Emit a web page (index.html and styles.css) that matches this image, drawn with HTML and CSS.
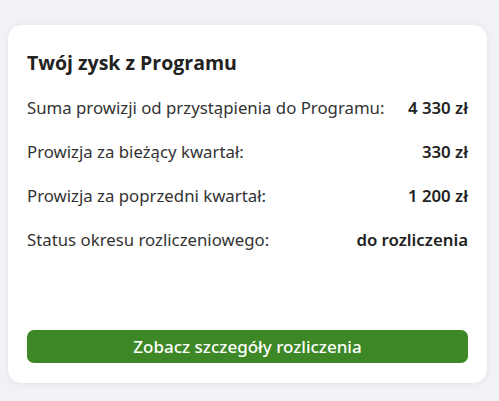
FILE: index.html
```html
<!DOCTYPE html>
<html lang="pl">
<head>
<meta charset="utf-8">
<link rel="stylesheet" href="styles.css">
</head>
<body>
<div class="card">
  <h2 class="title">Twój zysk z Programu</h2>
  <div class="rows">
    <div class="row"><span class="label">Suma prowizji od przystąpienia do Programu:</span><span class="value">4 330 zł</span></div>
    <div class="row"><span class="label">Prowizja za bieżący kwartał:</span><span class="value">330 zł</span></div>
    <div class="row"><span class="label">Prowizja za poprzedni kwartał:</span><span class="value">1 200 zł</span></div>
    <div class="row"><span class="label">Status okresu rozliczeniowego:</span><span class="value">do rozliczenia</span></div>
  </div>
  <button class="btn">Zobacz szczegóły rozliczenia</button>
</div>
</body>
</html>
```
FILE: styles.css
```css
html, body {
  margin: 0;
  padding: 0;
  background: #f1f2f6;
}
body {
  padding: 25px 12px 18px 8px;
  font-family: "Noto Sans", "Open Sans", sans-serif;
  color: #2b2b2b;
}
.card {
  background: #fff;
  border-radius: 14px;
  box-shadow: 0 1px 6px rgba(40, 45, 70, 0.08);
  height: 358px;
  box-sizing: border-box;
  padding: 26px 19px 20px 19px;
  display: flex;
  flex-direction: column;
}
.title {
  margin: 0;
  font-family: "Open Sans", sans-serif;
  font-weight: 700;
  font-size: 19.5px;
  line-height: 24px;
  color: #222;
}
.rows {
  margin-top: 21px;
  display: flex;
  flex-direction: column;
  gap: 21px;
}
.row {
  display: flex;
  justify-content: space-between;
  align-items: center;
  font-size: 16.8px;
  line-height: 23px;
}
.label {
  color: #333;
}
.value {
  font-weight: 600;
  color: #222;
}
.btn {
  margin-top: auto;
  height: 33px;
  border: none;
  border-radius: 7px;
  background: #3d8726;
  color: #fff;
  font-family: "Noto Sans", sans-serif;
  font-weight: 500;
  font-size: 17px;
  padding: 0;
}
```
